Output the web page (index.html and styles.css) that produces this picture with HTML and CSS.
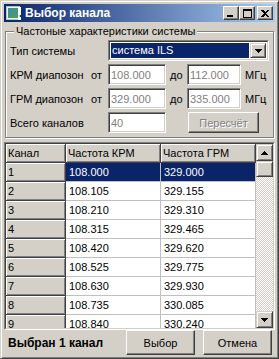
FILE: index.html
```html
<!DOCTYPE html>
<html lang="ru">
<head>
    <meta charset="UTF-8">
    <title>Выбор канала</title>
    <link rel="stylesheet" href="styles.css">
</head>
<body>
    <div class="window">
        <div class="titlebar">
            <svg class="app-icon" viewBox="0 0 16 16" width="16" height="16" shape-rendering="crispEdges">
                <defs>
                    <linearGradient id="ico" x1="0" y1="0" x2="1" y2="1">
                        <stop offset="0" stop-color="#3d8fa0"/>
                        <stop offset="1" stop-color="#48a060"/>
                    </linearGradient>
                </defs>
                <rect x="0" y="1" width="14" height="14" fill="#c0c0c0"/>
                <rect x="1" y="2" width="12" height="12" fill="#f0f0f0"/>
                <rect x="2" y="3" width="10" height="10" fill="url(#ico)"/>
                <rect x="12" y="2" width="3" height="8" fill="#fff"/>
                <rect x="12" y="12" width="3" height="3" fill="#fff"/>
            </svg>
            <span class="title">Выбор канала</span>
            <div class="caption-buttons">
                <span class="cap-btn">
                    <svg width="8" height="7" viewBox="0 0 8 7" shape-rendering="crispEdges"><rect x="0" y="5" width="6" height="2" fill="#000"/></svg>
                </span>
                <span class="cap-btn">
                    <svg width="9" height="9" viewBox="0 0 9 9" shape-rendering="crispEdges"><path d="M0 0h9v9h-9z M1 2v6h7v-6z" fill="#000" fill-rule="evenodd"/></svg>
                </span>
                <span class="cap-btn close">
                    <svg width="8" height="7" viewBox="0 0 8 7" shape-rendering="crispEdges"><path d="M0 0h2l2 2 2-2h2l-3 3.5 3 3.5h-2l-2-2-2 2h-2l3-3.5z" fill="#000"/></svg>
                </span>
            </div>
        </div>

        <div class="client">
            <fieldset class="group">
                <legend>Частоные характеристики системы</legend>
                <div class="form">
                    <span class="lbl wide">Тип системы</span>
                    <div class="combo">
                        <div class="combo-field">
                            <span class="combo-value">система ILS</span>
                            <span class="combo-btn">
                                <svg width="7" height="4" viewBox="0 0 7 4" shape-rendering="crispEdges"><path d="M0 0h7l-3.5 4z" fill="#000"/></svg>
                            </span>
                        </div>
                    </div>

                    <span class="lbl">КРМ диапозон</span>
                    <span class="lbl">от</span>
                    <input class="edit" value="108.000" readonly>
                    <span class="lbl to">до</span>
                    <input class="edit" value="112.000" readonly>
                    <span class="lbl unit">МГц</span>

                    <span class="lbl">ГРМ диапозон</span>
                    <span class="lbl">от</span>
                    <input class="edit" value="329.000" readonly>
                    <span class="lbl to">до</span>
                    <input class="edit" value="335.000" readonly>
                    <span class="lbl unit">МГц</span>

                    <span class="lbl wide">Всего каналов</span>
                    <input class="edit" value="40" readonly>
                    <button class="btn recalc" disabled>Пересчёт</button>
                </div>
            </fieldset>

            <div class="grid">
                <div class="grid-inner">
                    <div class="cells">
                        <div class="row head">
                            <span class="fixed">Канал</span>
                            <span class="fixed">Частота КРМ</span>
                            <span class="fixed">Частота ГРМ</span>
                        </div>
                        <div class="row selected">
                            <span class="fixed">1</span><span class="cell">108.000</span><span class="cell">329.000</span>
                        </div>
                        <div class="row">
                            <span class="fixed">2</span><span class="cell">108.105</span><span class="cell">329.155</span>
                        </div>
                        <div class="row">
                            <span class="fixed">3</span><span class="cell">108.210</span><span class="cell">329.310</span>
                        </div>
                        <div class="row">
                            <span class="fixed">4</span><span class="cell">108.315</span><span class="cell">329.465</span>
                        </div>
                        <div class="row">
                            <span class="fixed">5</span><span class="cell">108.420</span><span class="cell">329.620</span>
                        </div>
                        <div class="row">
                            <span class="fixed">6</span><span class="cell">108.525</span><span class="cell">329.775</span>
                        </div>
                        <div class="row">
                            <span class="fixed">7</span><span class="cell">108.630</span><span class="cell">329.930</span>
                        </div>
                        <div class="row">
                            <span class="fixed">8</span><span class="cell">108.735</span><span class="cell">330.085</span>
                        </div>
                        <div class="row">
                            <span class="fixed">9</span><span class="cell">108.840</span><span class="cell">330.240</span>
                        </div>
                    </div>
                    <div class="vscroll">
                        <span class="sb-btn">
                            <svg width="7" height="4" viewBox="0 0 7 4" shape-rendering="crispEdges"><path d="M3.5 0l3.5 4h-7z" fill="#000"/></svg>
                        </span>
                        <span class="sb-thumb"></span>
                        <span class="sb-track"></span>
                        <span class="sb-btn">
                            <svg width="7" height="4" viewBox="0 0 7 4" shape-rendering="crispEdges"><path d="M0 0h7l-3.5 4z" fill="#000"/></svg>
                        </span>
                    </div>
                </div>
            </div>

            <div class="footer">
                <span class="status">Выбран 1 канал</span>
                <button class="btn">Выбор</button>
                <button class="btn">Отмена</button>
            </div>
        </div>
    </div>
</body>
</html>
```

FILE: styles.css
```css
html,
body {
    margin: 0;
    padding: 0;
    overflow: hidden;
}

body {
    background: #d4d0c8;
    font: 11px "Liberation Sans", Arial, sans-serif;
    color: #000;
}

.window {
    box-sizing: border-box;
    width: 279px;
    height: 359px;
    padding: 3px;
    border: 1px solid;
    border-color: #d4d0c8 #404040 #404040 #d4d0c8;
    box-shadow: inset 1px 1px #fff, inset -1px -1px #808080;
    display: flex;
    flex-direction: column;
}

/* title bar */

.titlebar {
    height: 18px;
    padding: 0 2px;
    margin-bottom: 1px;
    display: flex;
    align-items: center;
    background: linear-gradient(to right, #0a246a, #a6caf0);
    color: #fff;
}

.app-icon {
    margin-right: 3px;
    flex: none;
}

.title {
    flex: 1;
    font-weight: bold;
    font-size: 12px;
}

.caption-buttons {
    display: flex;
}

.cap-btn {
    box-sizing: border-box;
    width: 16px;
    height: 14px;
    display: flex;
    align-items: center;
    justify-content: center;
    background: #d4d0c8;
    border: 1px solid;
    border-color: #fff #404040 #404040 #fff;
    box-shadow: inset -1px -1px #808080;
}

.cap-btn.close {
    margin-left: 2px;
}

/* client area */

.client {
    flex: 1;
    display: flex;
    flex-direction: column;
    min-height: 0;
}

.group {
    margin: 2px 1px 0;
    padding: 2px 0 4px 4px;
    border: 1px solid #808080;
    box-shadow: inset 1px 1px #fff, 1px 1px #fff;
    min-width: 0;
}

.group legend {
    margin-left: 4px;
    padding: 0 2px;
    line-height: 13px;
    background: #d4d0c8;
}

.form {
    display: grid;
    grid-template-columns: 81px 17px 58px 21px 54px auto;
    grid-auto-rows: 21px;
    row-gap: 3px;
    align-items: center;
}

.lbl {
    white-space: nowrap;
}

.lbl.wide {
    grid-column: span 2;
}

.lbl.to,
.lbl.unit {
    padding-left: 4px;
}

.combo {
    grid-column: 3 / 7;
    box-sizing: border-box;
    width: 161px;
    height: 21px;
    border: 1px solid;
    border-color: #808080 #fff #fff #808080;
}

.combo-field {
    height: 100%;
    box-sizing: border-box;
    padding: 1px;
    display: flex;
    gap: 1px;
    background: #fff;
    border: 1px solid;
    border-color: #404040 #d4d0c8 #d4d0c8 #404040;
}

.combo-value {
    flex: 1;
    padding-left: 1px;
    line-height: 15px;
    background: #0a246a;
    color: #fff;
}

.combo-btn,
.sb-btn {
    box-sizing: border-box;
    width: 16px;
    display: flex;
    align-items: center;
    justify-content: center;
    background: #d4d0c8;
    border: 1px solid;
    border-color: #d4d0c8 #404040 #404040 #d4d0c8;
    box-shadow: inset 1px 1px #fff, inset -1px -1px #808080;
}

.edit {
    box-sizing: border-box;
    height: 21px;
    width: 100%;
    margin: 0;
    padding: 0 2px;
    font: inherit;
    color: #808080;
    background: #fff;
    border: 1px solid;
    border-color: #808080 #fff #fff #808080;
    box-shadow: inset 1px 1px #404040, inset -1px -1px #d4d0c8;
    outline: none;
}

.btn {
    box-sizing: border-box;
    margin: 0;
    padding: 0;
    font: inherit;
    color: #000;
    background: #d4d0c8;
    border: 1px solid;
    border-color: #fff #404040 #404040 #fff;
    box-shadow: inset -1px -1px #808080;
}

.btn.recalc {
    grid-column: 4 / 7;
    margin-left: 22px;
    width: 71px;
    height: 21px;
}

.btn:disabled {
    color: #808080;
    text-shadow: 1px 1px #fff;
}

/* string grid */

.grid {
    margin-top: 4px;
    height: 188px;
    box-sizing: border-box;
    border: 1px solid;
    border-color: #808080 #fff #fff #808080;
}

.grid-inner {
    height: 100%;
    box-sizing: border-box;
    display: flex;
    border: 1px solid;
    border-color: #404040 #d4d0c8 #d4d0c8 #404040;
}

.cells {
    flex: 1;
    overflow: hidden;
    background: #fff;
}

.row {
    display: grid;
    grid-template-columns: 60px 95px 95px;
    height: 19px;
}

.fixed,
.cell {
    box-sizing: border-box;
    padding-left: 2px;
    line-height: 18px;
    white-space: nowrap;
    overflow: hidden;
    border-right: 1px solid #c0c0c0;
    border-bottom: 1px solid #c0c0c0;
}

.fixed {
    background: #d4d0c8;
    border-color: #404040;
    box-shadow: inset 1px 1px #fff, inset -1px -1px #808080;
}

.cell {
    padding-left: 3px;
}

.row.selected .cell {
    background: #0a246a;
    color: #fff;
}

.vscroll {
    width: 17px;
    display: flex;
    flex-direction: column;
}

.vscroll .sb-btn {
    width: 17px;
    height: 17px;
}

.sb-thumb {
    box-sizing: border-box;
    height: 16px;
    background: #d4d0c8;
    border: 1px solid;
    border-color: #d4d0c8 #404040 #404040 #d4d0c8;
    box-shadow: inset 1px 1px #fff, inset -1px -1px #808080;
}

.sb-track {
    flex: 1;
    background: repeating-conic-gradient(#fff 0 25%, #d4d0c8 0 50%) 0 0 / 2px 2px;
}

/* bottom bar */

.footer {
    flex: 1;
    display: flex;
    align-items: center;
    gap: 8px;
    padding: 0 3px 0 4px;
}

.status {
    flex: 1;
    font-weight: bold;
    font-size: 12px;
}

.footer .btn {
    width: 69px;
    height: 25px;
}
```
